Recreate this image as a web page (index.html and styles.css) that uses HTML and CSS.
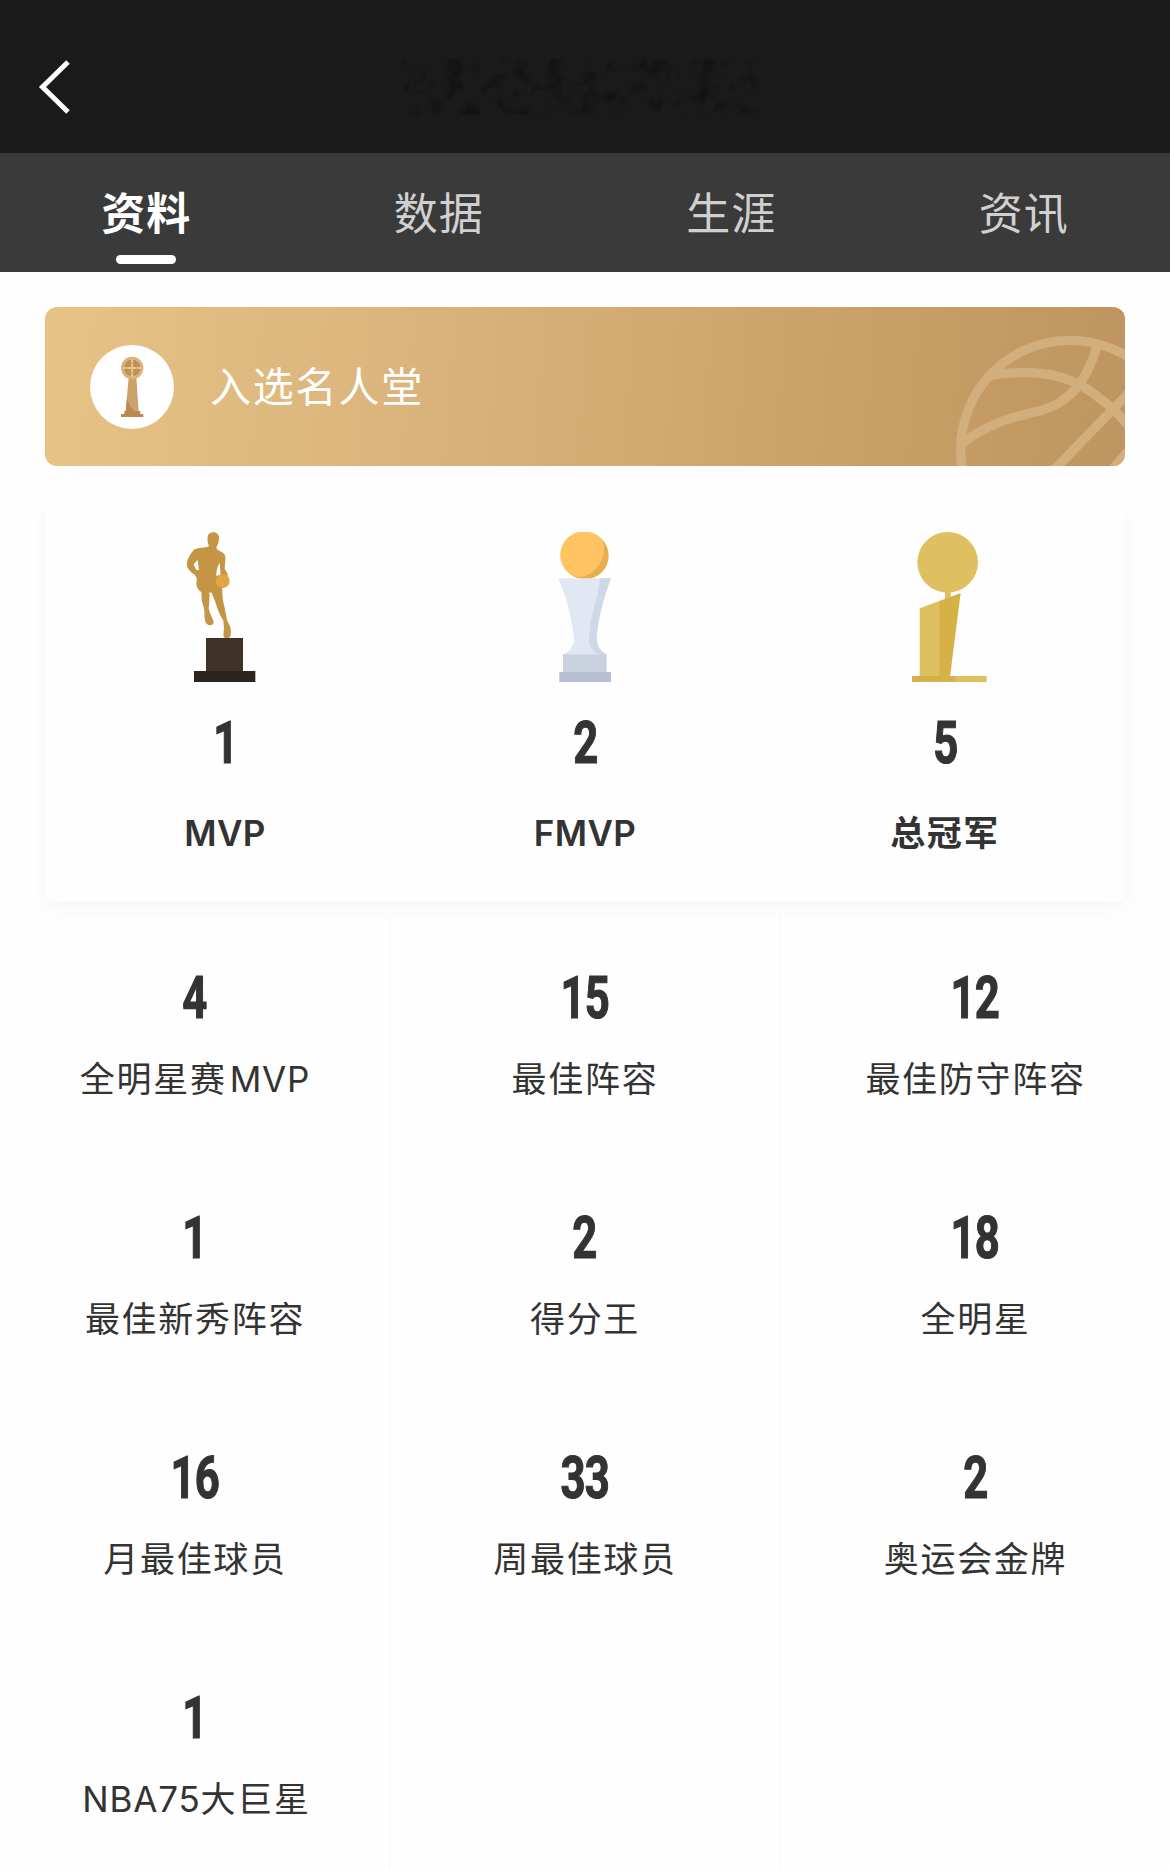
FILE: index.html
```html
<!DOCTYPE html>
<html lang="zh-CN">
<head>
<meta charset="UTF-8">
<meta name="viewport" content="width=device-width, initial-scale=1.0">
<title>球员资料</title>
<link rel="stylesheet" href="styles.css">
</head>
<body>

<header class="header">
    <svg class="back" viewBox="0 0 36 60">
        <path d="M31 5 L5.500 30 L31 55"/>
    </svg>
    <svg class="title-mask" viewBox="0 0 370 64">
        <filter id="smudge" x="0" y="0" width="1" height="1" color-interpolation-filters="sRGB">
            <feTurbulence type="fractalNoise" baseFrequency="0.06" numOctaves="3" seed="4"/>
            <feColorMatrix values="0 0 0 0 0.06  0 0 0 0 0.06  0 0 0 0 0.06  4 0 0 0 -2"/>
        </filter>
        <rect x="6" y="2" width="356" height="56" filter="url(#smudge)"/>
    </svg>
</header>

<nav class="tabs">
    <a class="tab active">资料</a>
    <a class="tab">数据</a>
    <a class="tab">生涯</a>
    <a class="tab">资讯</a>
</nav>

<section class="banner">
    <div class="banner-icon">
        <svg viewBox="264 195 84 192">
            <path d="M296 262 H319 L326 365 H287 Z" fill="#cba26a"/>
            <path d="M291 325 Q298 350 314 365 H287 Z" fill="#b98b52"/>
            <path d="M283 363 H331 V372 H340 V381 H273 V372 H283 Z" fill="#b88a50"/>
            <circle cx="306.500" cy="234" r="29" fill="#b98f58" stroke="#dcb27a" stroke-width="9"/>
            <path d="M306.500 207 V261 M280 234 H333" stroke="#efc78c" stroke-width="6"/>
            <circle cx="306.500" cy="234" r="15" fill="none" stroke="#c9a067" stroke-width="3"/>
        </svg>
    </div>
    <span class="banner-text">入选名人堂</span>
    <svg class="banner-ball" viewBox="150 51 525 477">
        <g fill="none" stroke="#d2ae7c" stroke-width="28">
            <circle cx="510" cy="479" r="328"/>
            <path d="M262 258 C390 235 490 250 565 300 C620 338 650 365 690 412"/>
            <path d="M185 463 C250 405 340 380 420 362 C520 335 565 260 592 165"/>
            <path d="M462 540 L690 305"/>
            <path d="M640 535 Q665 505 690 478"/>
        </g>
    </svg>
</section>

<section class="honors">
    <div class="honor">
        <svg class="trophy" viewBox="0 66 390 450">
            <path fill="#c49544" d="M160 67 C171 67 178 75 177 86 C177 97 173 105 169 112 C171 121 179 124 189 128 C196 133 197 141 196 149 L194 176 L203 192 C204 203 196 214 186 222 L187 250 C187 264 190 278 194 294 C197 309 199 319 201 331 C207 343 213 352 213 366 L211 380 L205 385 L194 384 L190 377 L192 354 L190 332 C179 315 172 297 166 276 L155 248 L148 247 C149 262 148 278 146 296 C149 311 157 322 161 335 C161 344 154 347 145 345 L137 339 L133 319 C136 303 129 287 125 270 L124 246 C111 237 106 224 111 206 L104 194 C92 187 82 177 80 163 C83 145 92 128 104 118 C116 113 136 114 147 109 C143 100 142 91 143 79 C145 71 152 67 160 67 Z"/>
            <path fill="#fefefe" d="M113 150 L117 181 L108 179 L101 163 Z M179 158 L182 194 L169 198 Q168 177 179 158 Z"/>
            <circle cx="188" cy="213" r="21" fill="#e3a443"/>
            <path fill="#3e3326" d="M138 384 H249 V484 H138 Z"/>
            <path fill="#2c251f" d="M102 483 H286 V516 H102 Z"/>
        </svg>
        <div class="number">1</div>
        <div class="honor-name latin">MVP</div>
    </div>
    <div class="honor">
        <svg class="trophy" viewBox="-30 66 390 450">
            <circle cx="165" cy="137" r="71" fill="#e9ae4f"/>
            <path fill="#ffc461" d="M215 88 A71 71 0 1 0 131 199 C190 212 240 140 215 88 Z"/>
            <path fill="#e1e8f4" d="M85 205 H243 C219 271 205 322 200 384 C202 410 211 424 230 433 H101 C119 424 129 411 132 388 C125 320 110 265 85 205 Z"/>
            <path fill="#cfd8e7" d="M210 205 H243 C219 271 205 322 200 384 C202 410 211 424 230 433 H205 C188 422 175 408 177 384 C181 312 205 268 210 205 Z"/>
            <path fill="#c9d1df" d="M99 433 H230 V487 H99 Z"/>
            <path fill="#b5c0d3" d="M88 486 H243 V516 H88 Z"/>
        </svg>
        <div class="number">2</div>
        <div class="honor-name latin">FMVP</div>
    </div>
    <div class="honor">
        <svg class="trophy" viewBox="-30 66 390 450">
            <circle cx="173" cy="157" r="91" fill="#dfc060"/>
            <path fill="#dfc060" d="M165 243 H182 V262 L165 270 Z"/>
            <path fill="#dfc060" d="M89 295 L150 272 V500 H89 Z"/>
            <path fill="#d6b246" d="M148 273 L212 249 L180 500 H148 Z"/>
            <path fill="#dfc060" d="M66 498 H290 V516 H66 Z"/>
            <path fill="#d4b249" d="M66 498 H196 V516 H66 Z"/>
        </svg>
        <div class="number">5</div>
        <div class="honor-name">总冠军</div>
    </div>
</section>

<section class="stats">
    <div class="stat"><div class="number">4</div><div class="stat-name">全明星赛<span class="latin">MVP</span></div></div>
    <div class="stat"><div class="number">15</div><div class="stat-name">最佳阵容</div></div>
    <div class="stat"><div class="number">12</div><div class="stat-name">最佳防守阵容</div></div>
    <div class="stat"><div class="number">1</div><div class="stat-name">最佳新秀阵容</div></div>
    <div class="stat"><div class="number">2</div><div class="stat-name">得分王</div></div>
    <div class="stat"><div class="number">18</div><div class="stat-name">全明星</div></div>
    <div class="stat"><div class="number">16</div><div class="stat-name">月最佳球员</div></div>
    <div class="stat"><div class="number">33</div><div class="stat-name">周最佳球员</div></div>
    <div class="stat"><div class="number">2</div><div class="stat-name">奥运会金牌</div></div>
    <div class="stat"><div class="number">1</div><div class="stat-name"><span class="latin">NBA75</span>大巨星</div></div>
    <div class="stat"></div>
    <div class="stat"></div>
</section>

</body>
</html>
```
FILE: styles.css
```css
* {
    box-sizing: border-box;
}
body {
    margin: 0;
    height: 1870px;
    overflow: hidden;
    background-color: #fefefe;
    color: #333;
    font-family: Inter, "Noto Sans CJK SC", sans-serif;
}
.header {
    display: flex;
    align-items: flex-start;
    height: 153px;
    padding: 57px 37px 0;
    background-color: #1a1a1a;
}
.back {
    width: 36px;
    height: 60px;
    fill: none;
    stroke: #fff;
    stroke-width: 5;
}
.title-mask {
    width: 370px;
    height: 64px;
    margin-left: 324px;
    opacity: 0.6;
}
.tabs {
    display: flex;
    height: 119px;
    background-color: #3a3a3a;
}
.tab {
    display: flex;
    flex-direction: column;
    align-items: center;
    flex: 1;
    padding-top: 31px;
    color: #d0d0d0;
    font-size: 44px;
    line-height: 60px;
    letter-spacing: 1px;
}
.tab.active {
    color: #fff;
    font-weight: 600;
}
.tab.active::after {
    content: "";
    width: 60px;
    height: 9px;
    margin-top: 11px;
    border-radius: 5px;
    background-color: #fff;
}
.banner {
    position: relative;
    display: flex;
    align-items: center;
    height: 159px;
    margin: 35px 45px 0;
    padding-left: 45px;
    border-radius: 12px;
    overflow: hidden;
    background: linear-gradient(95deg, #e6c386, #d8b17a 40%, #c9a067 75%, #be9560);
}
.banner-icon {
    display: flex;
    align-items: center;
    justify-content: center;
    width: 84px;
    height: 84px;
    border-radius: 50%;
    background-color: #fff;
}
.banner-icon svg {
    width: 28px;
    height: 64px;
}
.banner-text {
    margin-left: 36px;
    padding-bottom: 6px;
    color: #fff;
    font-size: 41px;
    font-weight: 400;
    letter-spacing: 1.8px;
}
.banner-ball {
    position: absolute;
    right: 0;
    top: 0;
    width: 175px;
    height: 159px;
}
.honors {
    display: flex;
    height: 397px;
    margin: 39px 45px 0;
    padding-top: 27px;
    border-radius: 10px;
    background-color: #fefefe;
    box-shadow: 0 6px 18px rgba(0, 0, 0, 0.04);
}
.honor {
    display: flex;
    flex-direction: column;
    align-items: center;
    flex: 1;
}
.trophy {
    width: 130px;
    height: 150px;
}
.number {
    font-family: Roboto, sans-serif;
    font-size: 59px;
    font-weight: 700;
    line-height: 68px;
    letter-spacing: -1px;
    transform: scaleX(0.74);
    -webkit-text-stroke: 1.2px #333;
}
.honor .number {
    margin-top: 27px;
}
.honor-name {
    margin-top: 31px;
    font-size: 35px;
    font-weight: 600;
    line-height: 50px;
    letter-spacing: 1.5px;
}
.stats {
    display: grid;
    grid-template-columns: repeat(3, 1fr);
    grid-auto-rows: 240px;
    margin-top: 13px;
}
.stat {
    display: flex;
    flex-direction: column;
    align-items: center;
    padding-top: 49px;
    border-right: 1px solid #f7f7f7;
}
.stat:nth-child(3n) {
    border-right: none;
}
.stat-name {
    margin-top: 22px;
    padding-left: 1px;
    font-size: 35px;
    line-height: 50px;
    letter-spacing: 1.7px;
}
.latin,
.honor-name.latin {
    letter-spacing: 0.4px;
}
.stat-name .latin {
    margin-left: 3px;
    letter-spacing: 0.8px;
}
```
